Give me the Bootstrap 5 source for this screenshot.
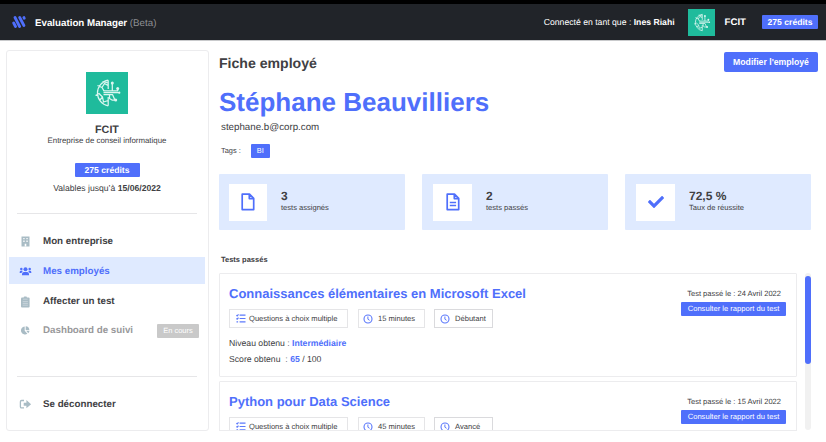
<!DOCTYPE html>
<html lang="fr">
<head>
<meta charset="utf-8">
<meta name="viewport" content="width=device-width, initial-scale=1">
<title>Evaluation Manager</title>
<link href="https://cdn.jsdelivr.net/npm/bootstrap@5.3.0/dist/css/bootstrap.min.css" rel="stylesheet">
<style>
:root { --brand: #4f6ffb; --soft: #dfeaff; --ink: #404043; --line: #ececee; }
body { font-family: "Liberation Sans", Arial, sans-serif; color: var(--ink); background: #fff; height: 442px; overflow: hidden; line-height: 1; text-rendering: geometricPrecision; }
svg { display: block; flex: none; }
.brand-text { color: var(--brand); }
.brand-fill { background: var(--brand); color: #fff; border-radius: 1px; }
.topbar { height: 41px; background: #212429; border-top: 4px solid #000; border-bottom: 1px solid #c9cacc; padding: 0 8px 0 12px; color: #fff; }
.app-name { font-size: 9.75px; margin-left: 9px; padding-top: 4px; }
.app-name span { color: #8f9194; }
.who { font-size: 8.66px; margin-right: 13px; }
.org { font-size: 9.65px; margin: 0 16px 0 10px; padding-top: 2px; }
.credits { font-size: 8.6px; width: 56px; height: 14px; }
.side { width: 203px; height: 381px; margin: 9px 0 0 6px; border: 1px solid var(--line); border-radius: 3px; padding: 21px 3px 0 2px; }
.side-org { font-size: 10.75px; line-height: 12px; margin-top: 10px; }
.side-desc { font-size: 7.87px; line-height: 10px; }
.side .credits { width: 65px; margin-top: 17px; }
.valid { font-size: 8.65px; line-height: 12px; margin-top: 5px; }
.side-line { width: 180px; height: 1px; background: #e6e6e8; margin-top: 19px; }
.menu { margin-top: 13px; }
.menu-item { height: 27px; padding: 2px 6px 0 10px; font-size: 9.78px; line-height: 11px; width: 196px; margin-bottom: 3px; }
.menu-item svg { margin-right: 11px; }
.menu-item.current { background: var(--soft); color: var(--brand); }
.menu-item.off { color: #98989a; margin-top: -1px; }
.menu .side-line { margin: 30px 0 13px; }
.soon { font-size: 7.5px; width: 42px; height: 14px; background: #c9c9c9; color: #fff; border-radius: 1px; }
.page { margin-left: 10px; width: 607px; padding-top: 11px; }
.page-title { font-size: 14.1px; line-height: 15px; padding-top: 2px; }
.edit-btn { --bs-btn-padding-x: 0; --bs-btn-padding-y: 0; --bs-btn-border-width: 0; border-radius: 2px; width: 94px; height: 20px; font-size: 8.7px; line-height: 1; margin-right: 8px; }
.person { font-size: 26px; line-height: 28px; margin: 16px 0 0; }
.mail { font-size: 9.75px; line-height: 14px; margin: 5px 0 0 2px; }
.tag-row { font-size: 7.4px; margin: 9px 0 0 2px; height: 14px; }
.tag-chip { width: 19px; height: 14px; margin-left: 10px; }
.stats { gap: 17px; margin-top: 16px; }
.stat { width: 186px; height: 56px; background: var(--soft); border-radius: 1px; padding-left: 11px; }
.stat-icon { width: 39px; height: 37px; background: #fff; margin-right: 14px; }
.stat:first-child { padding-left: 10px; }
.stat:first-child .stat-icon { width: 38px; }
.stat-text { padding-bottom: 2px; }
.stat-num { font-size: 12px; line-height: 13px; }
.stat-lbl { font-size: 7.55px; line-height: 9px; }
.sub { font-size: 7.5px; line-height: 10px; margin: 25px 0 8px 2px; }
.results { height: 158px; }
.result-list { width: 578px; height: 158px; overflow: hidden; gap: 4px; border-bottom: 1px solid var(--line); }
.result { height: 104px; flex: none; border: 1px solid var(--line); border-radius: 1px; padding: 13px 10px 0 9px; }
.result-title { font-size: 13px; line-height: 14px; margin: 0 0 8px; }
.pill { height: 19px; border: 1px solid #e5e5e7; font-size: 7.58px; padding-left: 6px; }
.pill svg { margin-right: 3px; }
.pill-q { width: 119px; margin-right: 10px; }
.pill-t { width: 67px; margin-right: 9px; padding-left: 4px; }
.pill-l { width: 59px; padding-left: 5px; border-color: #dadadd; }
.pill-t svg, .pill-l svg { margin-right: 5px; }
.facts { margin-top: 7px; }
.fact { font-size: 8.66px; line-height: 16px; }
.result-date { font-size: 7.55px; line-height: 10px; margin: 2px 5px 3px 0; }
.report-btn { font-size: 7.6px; width: 105px; height: 14px; }
.track { width: 6px; height: 157px; background: #f1f1f1; border-radius: 3px; margin-left: 8px; padding-top: 3px; }
.thumb { width: 6px; height: 88px; background: var(--brand); border-radius: 3px; }
</style>
<script src="https://cdn.jsdelivr.net/npm/bootstrap@5.3.0/dist/js/bootstrap.bundle.min.js"></script>
</head>
<body>
<svg width="0" height="0" class="position-absolute">
  <symbol id="globe" viewBox="0 0 42 42">
    <rect width="42" height="42" fill="#1fbb9c"/>
    <g fill="none" stroke="#dcf6f0" stroke-width="1.25" stroke-linejoin="round">
      <path d="M22.200 8.200A13 13 0 0 0 22.200 33.800M22.200 8.200V17M22.200 25V33.800M11.500 13.500L16 15.500 18 19M16 15.500l2.500-4 3.500 2M16.500 9.500l5.500 1.500M9.500 23.500l3.500-2 3.500 3.500-2.500 3M16.500 25l1 5 4.700-1.500"/>
      <path d="M17.500 18.800H31.700V16.700M17.500 20.700H34M17.500 22.600H26.500l2.200 5M26.300 18.600V11M23.500 23v3.500l2.500 1.500h3.500"/>
    </g>
    <g fill="#dcf6f0"><circle cx="26.300" cy="11" r="1.500"/><circle cx="31.700" cy="16.500" r="1.500"/><circle cx="29.700" cy="28" r="1.500"/><circle cx="33.300" cy="20.700" r="1.100"/></g>
  </symbol>
  <symbol id="list" viewBox="0 0 10 9">
    <path d="M3.600 1.200H9.500M3.600 4.500H9.500M3.600 7.800H9.500M.4 1.200l.8.7L2.500.4M.4 4.500l.8.7 1.300-1.500M.5 7.800h1.600" fill="none" stroke="#5c79fb" stroke-width="1.200"/>
  </symbol>
  <symbol id="clock" viewBox="0 0 10 10">
    <circle cx="5" cy="5" r="4" fill="none" stroke="#5c79fb" stroke-width="1.100"/><path d="M4.900 2.500V5.200L6.600 6.300" fill="none" stroke="#5c79fb" stroke-width="1"/>
  </symbol>
</svg>

<header class="topbar d-flex align-items-center">
  <svg width="14" height="14" viewBox="0 0 14 14" fill="none" stroke="#4f6ffb" stroke-width="2.800" stroke-linecap="round"><path d="M1.700 8l1.800 3.500M3 2.500l4.600 9M7.700 2.500l4.200 8M11.900 2.500l.3.800"/></svg>
  <div class="app-name"><b>Evaluation Manager</b> <span>(Beta)</span></div>
  <div class="who ms-auto">Connecté en tant que : <b>Ines Riahi</b></div>
  <svg width="27" height="27"><use href="#globe"/></svg>
  <b class="org">FCIT</b>
  <b class="credits brand-fill d-flex align-items-center justify-content-center">275 crédits</b>
</header>

<div class="d-flex align-items-start">
  <aside class="side d-flex flex-column">
    <div class="d-flex flex-column align-items-center">
      <svg width="42" height="42"><use href="#globe"/></svg>
      <b class="side-org">FCIT</b>
      <div class="side-desc">Entreprise de conseil informatique</div>
      <b class="credits brand-fill d-flex align-items-center justify-content-center">275 crédits</b>
      <div class="valid">Valables jusqu’à <b>15/06/2022</b></div>
      <div class="side-line"></div>
    </div>
    <nav class="menu d-flex flex-column fw-bold">
      <a class="menu-item d-flex align-items-center text-reset text-decoration-none">
        <svg width="13" height="11" viewBox="0 0 13 11"><path d="M2.500.5h8v10h-8z" fill="#a9bcc5"/><path d="M4.300 2h1.300v1.300H4.300zM7.400 2h1.300v1.300H7.400zM4.300 4.600h1.300v1.300H4.300zM7.400 4.600h1.300v1.300H7.400zM5.700 7.700h1.600v2.800H5.700z" fill="#fff"/></svg>Mon entreprise</a>
      <a class="menu-item current d-flex align-items-center text-decoration-none">
        <svg width="13" height="11" viewBox="0 0 13 11" fill="#4f6ffb"><circle cx="6.500" cy="3.300" r="2"/><circle cx="2.300" cy="3.100" r="1.250"/><circle cx="10.700" cy="3.100" r="1.250"/><path d="M3 9.300V8.100Q3 5.900 5 5.900h3q2 0 2 2.200v1.200zM.7 7V6q0-1.300 1.300-1.300h1q.5 0 .9.300Q2.700 5.800 2.500 7zM12.300 7V6q0-1.300-1.300-1.300h-1q-.5 0-.9.300 1.200.8 1.400 2z"/></svg>Mes employés</a>
      <a class="menu-item d-flex align-items-center text-reset text-decoration-none">
        <svg width="13" height="12" viewBox="0 0 13 12"><rect x="2" y="1.500" width="8.600" height="10" rx="1" fill="#a9bcc5"/><rect x="4.700" y=".4" width="3.200" height="2" rx=".8" fill="#a9bcc5"/><path d="M4 3.200h4.600M3.700 5.600h5.200M3.700 7.400h5.200M3.700 9.200h5.200" stroke="#dbe3e7" stroke-width=".6"/></svg>Affecter un test</a>
      <a class="menu-item off d-flex align-items-center text-decoration-none">
        <svg width="13" height="11" viewBox="0 0 13 11" fill="#a9bcc5"><path d="M5.700 1.500v4.200l2.700 3A4 4 0 1 1 5.700 1.500zM6.700 1.200A4 4 0 0 1 10.400 4.900H6.700zM7.200 5.800h3.300A4 4 0 0 1 9.300 8.300z"/></svg>Dashboard de suivi
        <span class="soon ms-auto fw-normal d-flex align-items-center justify-content-center">En cours</span></a>
      <div class="side-line align-self-center"></div>
      <a class="menu-item d-flex align-items-center text-reset text-decoration-none">
        <svg width="13" height="11" viewBox="0 0 13 11"><path d="M5 1.500H2.600Q1.400 1.500 1.400 2.700v5q0 1.200 1.200 1.200H5" fill="none" stroke="#a9bcc5" stroke-width="1.300"/><path d="M4.700 3.800h2.700V1.100l4.700 4.100-4.700 4.100V6.700H4.700z" fill="#a9bcc5"/></svg>Se déconnecter</a>
    </nav>
  </aside>

  <main class="page">
    <div class="d-flex align-items-center justify-content-between">
      <b class="page-title">Fiche employé</b>
      <button class="btn edit-btn brand-fill fw-bold">Modifier l'employé</button>
    </div>
    <h1 class="person fw-bold brand-text">Stéphane Beauvilliers</h1>
    <div class="mail">stephane.b@corp.com</div>
    <div class="tag-row d-flex align-items-center">Tags : <span class="tag-chip brand-fill d-flex align-items-center justify-content-center">BI</span></div>

    <section class="stats d-flex">
      <div class="stat d-flex align-items-center">
        <div class="stat-icon d-flex align-items-center justify-content-center"><svg width="14" height="18" viewBox="0 0 14 18" fill="none" stroke="#4f6ffb" stroke-width="1.700" stroke-linejoin="round"><path d="M1.200 1.200h7.300l4.200 4.200v11.200H1.200zM8.300 1.200v4.400h4.400"/></svg></div>
        <div class="stat-text"><b class="stat-num d-block">3</b><div class="stat-lbl">tests assignés</div></div>
      </div>
      <div class="stat d-flex align-items-center">
        <div class="stat-icon d-flex align-items-center justify-content-center"><svg width="14" height="18" viewBox="0 0 14 18" fill="none" stroke="#4f6ffb" stroke-width="1.700" stroke-linejoin="round"><path d="M1.200 1.200h7.300l4.200 4.200v11.200H1.200zM8.300 1.200v4.400h4.400M3.800 9.500h6.300M3.800 12.500h6.300"/></svg></div>
        <div class="stat-text"><b class="stat-num d-block">2</b><div class="stat-lbl">tests passés</div></div>
      </div>
      <div class="stat d-flex align-items-center">
        <div class="stat-icon d-flex align-items-center justify-content-center"><svg width="16" height="16" viewBox="0 0 512 512" fill="#4f6ffb"><path d="M173.898 439.404l-166.400-166.400c-9.997-9.997-9.997-26.206 0-36.204l36.203-36.204c9.997-9.998 26.207-9.998 36.204 0L192 312.690 432.095 72.596c9.997-9.997 26.207-9.997 36.204 0l36.203 36.204c9.997 9.997 9.997 26.206 0 36.204l-294.400 294.401c-9.998 9.997-26.207 9.997-36.204-.001z"/></svg></div>
        <div class="stat-text"><b class="stat-num d-block">72,5 %</b><div class="stat-lbl">Taux de réussite</div></div>
      </div>
    </section>

    <div class="sub fw-bold">Tests passés</div>
    <div class="results d-flex">
      <div class="result-list d-flex flex-column">
        <article class="result d-flex justify-content-between">
          <div>
            <h2 class="result-title fw-bold brand-text">Connaissances élémentaires en Microsoft Excel</h2>
            <div class="d-flex">
              <div class="pill pill-q d-flex align-items-center"><svg width="10" height="9"><use href="#list"/></svg>Questions à choix multiple</div>
              <div class="pill pill-t d-flex align-items-center"><svg width="10" height="10"><use href="#clock"/></svg>15 minutes</div>
              <div class="pill pill-l d-flex align-items-center"><svg width="10" height="10"><use href="#clock"/></svg>Débutant</div>
            </div>
            <div class="facts">
              <div class="fact">Niveau obtenu : <b class="brand-text">Intermédiaire</b></div>
              <div class="fact">Score obtenu &nbsp;: <b class="brand-text">65</b> / 100</div>
            </div>
          </div>
          <div class="d-flex flex-column align-items-end">
            <div class="result-date">Test passé le : 24 Avril 2022</div>
            <div class="report-btn brand-fill d-flex align-items-center justify-content-center">Consulter le rapport du test</div>
          </div>
        </article>
        <article class="result d-flex justify-content-between">
          <div>
            <h2 class="result-title fw-bold brand-text">Python pour Data Science</h2>
            <div class="d-flex">
              <div class="pill pill-q d-flex align-items-center"><svg width="10" height="9"><use href="#list"/></svg>Questions à choix multiple</div>
              <div class="pill pill-t d-flex align-items-center"><svg width="10" height="10"><use href="#clock"/></svg>45 minutes</div>
              <div class="pill pill-l d-flex align-items-center"><svg width="10" height="10"><use href="#clock"/></svg>Avancé</div>
            </div>
          </div>
          <div class="d-flex flex-column align-items-end">
            <div class="result-date">Test passé le : 15 Avril 2022</div>
            <div class="report-btn brand-fill d-flex align-items-center justify-content-center">Consulter le rapport du test</div>
          </div>
        </article>
      </div>
      <div class="track"><div class="thumb"></div></div>
    </div>
  </main>
</div>
</body>
</html>
